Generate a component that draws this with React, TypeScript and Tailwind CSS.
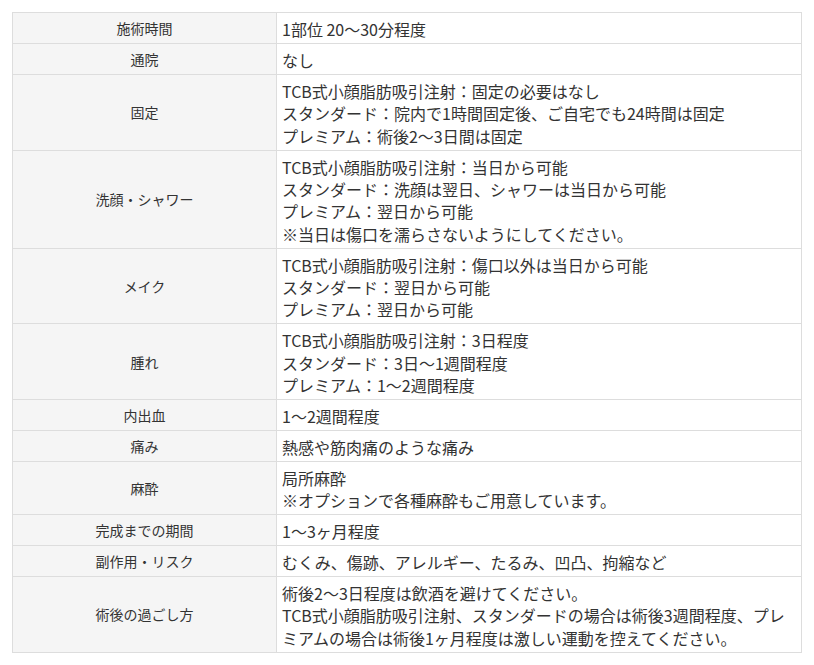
import React from 'react'

interface Row {
  label: string
  lines: string[]
}

const rows: Row[] = [
  { label: '施術時間', lines: ['1部位 20～30分程度'] },
  { label: '通院', lines: ['なし'] },
  {
    label: '固定',
    lines: [
      'TCB式小顔脂肪吸引注射：固定の必要はなし',
      'スタンダード：院内で1時間固定後、ご自宅でも24時間は固定',
      'プレミアム：術後2～3日間は固定',
    ],
  },
  {
    label: '洗顔・シャワー',
    lines: [
      'TCB式小顔脂肪吸引注射：当日から可能',
      'スタンダード：洗顔は翌日、シャワーは当日から可能',
      'プレミアム：翌日から可能',
      '※当日は傷口を濡らさないようにしてください。',
    ],
  },
  {
    label: 'メイク',
    lines: [
      'TCB式小顔脂肪吸引注射：傷口以外は当日から可能',
      'スタンダード：翌日から可能',
      'プレミアム：翌日から可能',
    ],
  },
  {
    label: '腫れ',
    lines: [
      'TCB式小顔脂肪吸引注射：3日程度',
      'スタンダード：3日～1週間程度',
      'プレミアム：1～2週間程度',
    ],
  },
  { label: '内出血', lines: ['1～2週間程度'] },
  { label: '痛み', lines: ['熱感や筋肉痛のような痛み'] },
  { label: '麻酔', lines: ['局所麻酔', '※オプションで各種麻酔もご用意しています。'] },
  { label: '完成までの期間', lines: ['1～3ヶ月程度'] },
  { label: '副作用・リスク', lines: ['むくみ、傷跡、アレルギー、たるみ、凹凸、拘縮など'] },
  {
    label: '術後の過ごし方',
    lines: [
      '術後2～3日程度は飲酒を避けてください。',
      'TCB式小顔脂肪吸引注射、スタンダードの場合は術後3週間程度、プレ',
      'ミアムの場合は術後1ヶ月程度は激しい運動を控えてください。',
    ],
  },
]

export default function App() {
  return (
    <div className="bg-white min-h-[665px] pt-[12px] pl-[12px] font-['Noto_Sans_CJK_JP',sans-serif] text-[#333]">
      <table className="w-[790px] border-collapse border border-[#dddddd]">
        <tbody>
          {rows.map((row) => (
            <tr key={row.label}>
              <th className="w-[264px] border border-[#dddddd] bg-[#f5f5f5] px-[5px] pt-[4px] pb-[3.5px] text-center align-middle text-[14px] font-normal leading-[22.4px]">
                {row.label}
              </th>
              <td className="border border-[#dddddd] bg-white px-[5px] pt-[5px] pb-[2.5px] text-left align-top text-[16px] leading-[22.4px] whitespace-nowrap">
                {row.lines.map((line, i) => (
                  <div key={i}>{line}</div>
                ))}
              </td>
            </tr>
          ))}
        </tbody>
      </table>
    </div>
  )
}
